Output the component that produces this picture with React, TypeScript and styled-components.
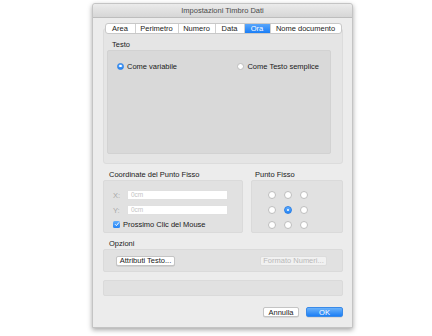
import React from "react";
import styled, { createGlobalStyle } from "styled-components";

const GlobalStyle = createGlobalStyle`
  html, body {
    margin: 0;
    padding: 0;
    background: #ffffff;
    font-family: "Liberation Sans", Arial, sans-serif;
    font-size: 7.5px;
    color: #1a1a1a;
  }
`;

const Page = styled.div`
  width: 432px;
  height: 336px;
  padding: 3px 0 0 92px;
  box-sizing: border-box;
`;

const Window = styled.div`
  width: 261px;
  height: 325px;
  box-sizing: border-box;
  display: flex;
  flex-direction: column;
  background: #ececec;
  border: 1px solid #c4c4c4;
  border-radius: 3px 3px 0 0;
  box-shadow: 0 2px 5px rgba(0, 0, 0, 0.35);
`;

const TitleBar = styled.div`
  height: 13px;
  display: flex;
  align-items: center;
  justify-content: center;
  background: linear-gradient(#ebebeb, #d6d6d6);
  border-bottom: 1px solid #bdbdbd;
  color: #4a4a4a;
  border-radius: 3px 3px 0 0;
`;

const Body = styled.div`
  display: flex;
  flex-direction: column;
  padding: 5px 9px 0 10px;
`;

const TabBar = styled.div`
  display: flex;
  align-self: center;
  height: 11px;
  margin-bottom: -6px;
  position: relative;
  z-index: 1;
  background: #ffffff;
  border: 1px solid #c8c8c8;
  border-radius: 3px;
  box-sizing: border-box;
  overflow: hidden;
`;

const Tab = styled.div<{ $active?: boolean; $w: number }>`
  width: ${(p) => p.$w}px;
  display: flex;
  align-items: center;
  justify-content: center;
  border-left: 1px solid #d0d0d0;
  color: ${(p) => (p.$active ? "#ffffff" : "#1a1a1a")};
  background: ${(p) => (p.$active ? "linear-gradient(#59a6fb, #1a7ef6)" : "transparent")};
  &:first-child {
    border-left: none;
  }
`;

const TabPanel = styled.div`
  height: 136px;
  box-sizing: border-box;
  background: #e5e5e5;
  border: 1px solid #dcdcdc;
  border-radius: 3px;
  padding: 12px 11px 9px 3px;
  display: flex;
  flex-direction: column;
`;

const Label = styled.div<{ $indent?: number }>`
  line-height: 8px;
  height: 8px;
  padding-left: ${(p) => p.$indent ?? 5}px;
  margin-bottom: 1px;
`;

const GroupBox = styled.div<{ $bg?: string }>`
  box-sizing: border-box;
  background: ${(p) => p.$bg ?? "#e1e1e1"};
  border: 1px solid ${(p) => (p.$bg ? "#d2d2d2" : "#dadada")};
  border-radius: 2px;
`;

const TextBox = styled(GroupBox)`
  flex: 1;
  display: flex;
  align-items: flex-start;
  justify-content: space-between;
  padding: 11px 11px 0 9px;
`;

const Option = styled.label`
  display: flex;
  align-items: center;
  gap: 3px;
  height: 8px;
`;

const Radio = styled.span<{ $on?: boolean; $size?: number }>`
  width: ${(p) => p.$size ?? 7}px;
  height: ${(p) => p.$size ?? 7}px;
  box-sizing: border-box;
  border-radius: 50%;
  display: inline-flex;
  align-items: center;
  justify-content: center;
  background: ${(p) => (p.$on ? "linear-gradient(#63aefc, #2585f6)" : "#ffffff")};
  border: 1px solid ${(p) => (p.$on ? "#2a7fe6" : "#bdbdbd")};
  &::after {
    content: "";
    width: 2.5px;
    height: 2.5px;
    border-radius: 50%;
    background: ${(p) => (p.$on ? "#ffffff" : "transparent")};
  }
`;

const Row = styled.div`
  display: flex;
  gap: 8px;
  margin-top: 7px;
`;

const Column = styled.div<{ $w?: number }>`
  display: flex;
  flex-direction: column;
  width: ${(p) => (p.$w ? `${p.$w}px` : "auto")};
  flex: ${(p) => (p.$w ? "none" : 1)};
`;

const Section = styled.div`
  display: flex;
  flex-direction: column;
  margin-top: 7px;
`;

const CoordBox = styled(GroupBox)`
  height: 53px;
  display: flex;
  flex-direction: column;
  gap: 5px;
  padding: 9px 0 0 9px;
`;

const FieldRow = styled.div`
  display: flex;
  align-items: center;
  height: 10px;
`;

const FieldLabel = styled.span`
  width: 14px;
  color: #a8a8a8;
`;

const Field = styled.div`
  width: 101px;
  height: 10px;
  box-sizing: border-box;
  background: #ffffff;
  border: 1px solid #e0e0e0;
  color: #c4c4c4;
  padding-left: 3px;
  font-size: 6.5px;
  line-height: 8px;
`;

const Check = styled.span`
  width: 7px;
  height: 7px;
  border-radius: 1.5px;
  background: linear-gradient(#63aefc, #2585f6);
  display: inline-flex;
  align-items: center;
  justify-content: center;
`;

const DotBox = styled(GroupBox)`
  height: 53px;
  display: grid;
  grid-template-columns: repeat(3, 8px);
  grid-auto-rows: 8px;
  column-gap: 8px;
  row-gap: 7px;
  padding: 10px 0 0 16px;
`;

const OptionsBox = styled(GroupBox)`
  height: 23px;
  display: flex;
  align-items: center;
  justify-content: space-between;
  padding: 0 15px 0 12px;
`;

const Button = styled.div<{ $disabled?: boolean; $primary?: boolean; $w: number }>`
  width: ${(p) => p.$w}px;
  height: 10px;
  box-sizing: border-box;
  display: flex;
  align-items: center;
  justify-content: center;
  border-radius: 2px;
  color: ${(p) => (p.$primary ? "#ffffff" : p.$disabled ? "#b8b8b8" : "#1a1a1a")};
  background: ${(p) =>
    p.$primary ? "linear-gradient(#6cb3fa, #1c7ff6)" : p.$disabled ? "#f1f1f1" : "#ffffff"};
  border: 1px solid ${(p) => (p.$primary ? "#3a8ae8" : p.$disabled ? "#dcdcdc" : "#c4c4c4")};
  box-shadow: ${(p) => (p.$disabled ? "none" : "0 0.5px 0 rgba(0,0,0,0.15)")};
`;

const EmptyBox = styled(GroupBox)`
  height: 16px;
  margin-top: 8px;
`;

const Footer = styled.div`
  display: flex;
  justify-content: flex-end;
  gap: 7px;
  margin-top: 11px;
`;

const tabs: [string, number][] = [
  ["Area", 29],
  ["Perimetro", 42],
  ["Numero", 36],
  ["Data", 28],
  ["Ora", 25],
  ["Nome documento", 70],
];

export default function App() {
  return (
    <>
      <GlobalStyle />
      <Page>
        <Window>
          <TitleBar>Impostazioni Timbro Dati</TitleBar>
          <Body>
            <TabBar>
              {tabs.map(([t, w]) => (
                <Tab key={t} $w={w} $active={t === "Ora"}>
                  {t}
                </Tab>
              ))}
            </TabBar>
            <TabPanel>
              <Label>Testo</Label>
              <TextBox $bg="#d9d9d9">
                <Option>
                  <Radio $on />
                  Come variabile
                </Option>
                <Option>
                  <Radio />
                  Come Testo semplice
                </Option>
              </TextBox>
            </TabPanel>

            <Row>
              <Column $w={140}>
                <Label $indent={6}>Coordinate del Punto Fisso</Label>
                <CoordBox>
                  <FieldRow>
                    <FieldLabel>X:</FieldLabel>
                    <Field>0cm</Field>
                  </FieldRow>
                  <FieldRow>
                    <FieldLabel>Y:</FieldLabel>
                    <Field>0cm</Field>
                  </FieldRow>
                  <Option>
                    <Check>
                      <svg width="6" height="6" viewBox="0 0 6 6">
                        <path d="M1 3.2 L2.4 4.6 L5 1.4" stroke="#fff" strokeWidth="1" fill="none" />
                      </svg>
                    </Check>
                    Prossimo Clic del Mouse
                  </Option>
                </CoordBox>
              </Column>
              <Column>
                <Label $indent={4}>Punto Fisso</Label>
                <DotBox>
                  {Array.from({ length: 9 }).map((_, i) => (
                    <Radio key={i} $on={i === 4} $size={8} />
                  ))}
                </DotBox>
              </Column>
            </Row>

            <Section>
              <Label $indent={6}>Opzioni</Label>
              <OptionsBox>
                <Button $w={59}>Attributi Testo...</Button>
                <Button $w={67} $disabled>
                  Formato Numeri...
                </Button>
              </OptionsBox>
            </Section>

            <EmptyBox />

            <Footer>
              <Button $w={36}>Annulla</Button>
              <Button $w={37} $primary>
                OK
              </Button>
            </Footer>
          </Body>
        </Window>
      </Page>
    </>
  );
}
